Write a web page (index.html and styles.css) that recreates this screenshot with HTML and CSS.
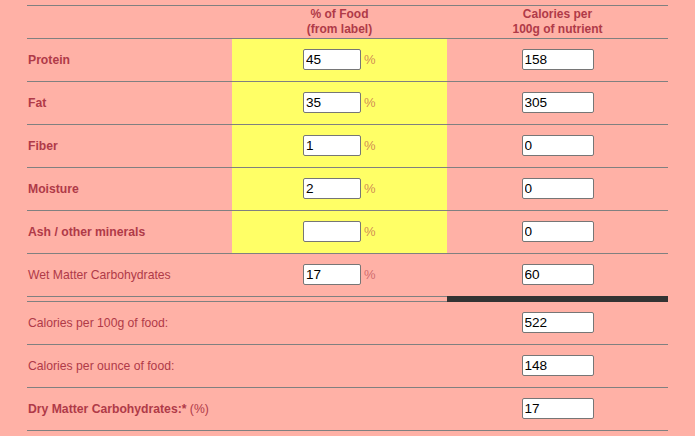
FILE: index.html
```html
<!DOCTYPE html>
<html>
<head>
<meta charset="utf-8">
<link rel="stylesheet" href="styles.css">
</head>
<body>
<div class="calc">
  <div class="row head">
    <div class="cell"></div>
    <div class="cell center">% of Food<br>(from label)</div>
    <div class="cell center">Calories per<br>100g of nutrient</div>
  </div>
  <div class="row">
    <div class="cell label bold">Protein</div>
    <div class="cell center yellow"><input class="pct" value="45"><span class="unit">%</span></div>
    <div class="cell center"><input class="cal" value="158"></div>
  </div>
  <div class="row">
    <div class="cell label bold">Fat</div>
    <div class="cell center yellow"><input class="pct" value="35"><span class="unit">%</span></div>
    <div class="cell center"><input class="cal" value="305"></div>
  </div>
  <div class="row">
    <div class="cell label bold">Fiber</div>
    <div class="cell center yellow"><input class="pct" value="1"><span class="unit">%</span></div>
    <div class="cell center"><input class="cal" value="0"></div>
  </div>
  <div class="row">
    <div class="cell label bold">Moisture</div>
    <div class="cell center yellow"><input class="pct" value="2"><span class="unit">%</span></div>
    <div class="cell center"><input class="cal" value="0"></div>
  </div>
  <div class="row">
    <div class="cell label bold">Ash / other minerals</div>
    <div class="cell center yellow"><input class="pct" value=""><span class="unit">%</span></div>
    <div class="cell center"><input class="cal" value="0"></div>
  </div>
  <div class="row noline">
    <div class="cell label">Wet Matter Carbohydrates</div>
    <div class="cell center"><input class="pct" value="17"><span class="unit">%</span></div>
    <div class="cell center"><input class="cal" value="60"></div>
  </div>
  <div class="sep">
    <div class="sep-line"></div>
    <div class="sep-bar"></div>
  </div>
  <div class="row">
    <div class="cell label">Calories per 100g of food:</div>
    <div class="cell"></div>
    <div class="cell center"><input class="cal" value="522"></div>
  </div>
  <div class="row">
    <div class="cell label">Calories per ounce of food:</div>
    <div class="cell"></div>
    <div class="cell center"><input class="cal" value="148"></div>
  </div>
  <div class="row">
    <div class="cell label"><span><b>Dry Matter Carbohydrates:*</b> (%)</span></div>
    <div class="cell"></div>
    <div class="cell center"><input class="cal" value="17"></div>
  </div>
</div>
</body>
</html>
```

FILE: styles.css
```css
html, body {
  margin: 0;
  padding: 0;
  background: #ffb1a6;
}
body {
  font-family: "Liberation Sans", Arial, sans-serif;
  color: #b03a48;
}
.calc {
  padding: 5px 0 0 27px;
  width: 641px;
}
.row {
  display: grid;
  grid-template-columns: 205px 215px 221px;
  height: 43px;
  box-sizing: border-box;
  border-bottom: 1px solid #808080;
}
.row.noline {
  border-bottom: none;
  height: 42px;
}
.row.head {
  height: 34px;
  border-top: 1px solid #808080;
  font-size: 12px;
  font-weight: bold;
  line-height: 15px;
}
.cell {
  display: flex;
  align-items: center;
  padding-bottom: 1px;
}
.head .cell {
  padding-bottom: 0;
}
.center {
  justify-content: center;
  text-align: center;
}
.yellow {
  background: #ffff66;
}
.label {
  padding-left: 1px;
  font-size: 12.2px;
}
.bold {
  font-weight: bold;
}
input {
  font-family: "Liberation Sans", Arial, sans-serif;
  font-size: 13.6px;
  color: #000;
  background: #fff;
  height: 21px;
  box-sizing: border-box;
  border: 1px solid #767676;
  border-radius: 2px;
  padding: 1px 2px;
  margin: 0;
}
.pct {
  width: 58px;
}
.cal {
  width: 72px;
}
.unit {
  margin-left: 3px;
  width: 12px;
  text-align: left;
  font-size: 13px;
  color: rgba(176, 58, 72, 0.62);
}
.sep {
  display: grid;
  grid-template-columns: 420px 221px;
  height: 6px;
}
.sep-line {
  border-top: 1px solid #808080;
  border-bottom: 1px solid #808080;
}
.sep-bar {
  background: #333333;
}
```
